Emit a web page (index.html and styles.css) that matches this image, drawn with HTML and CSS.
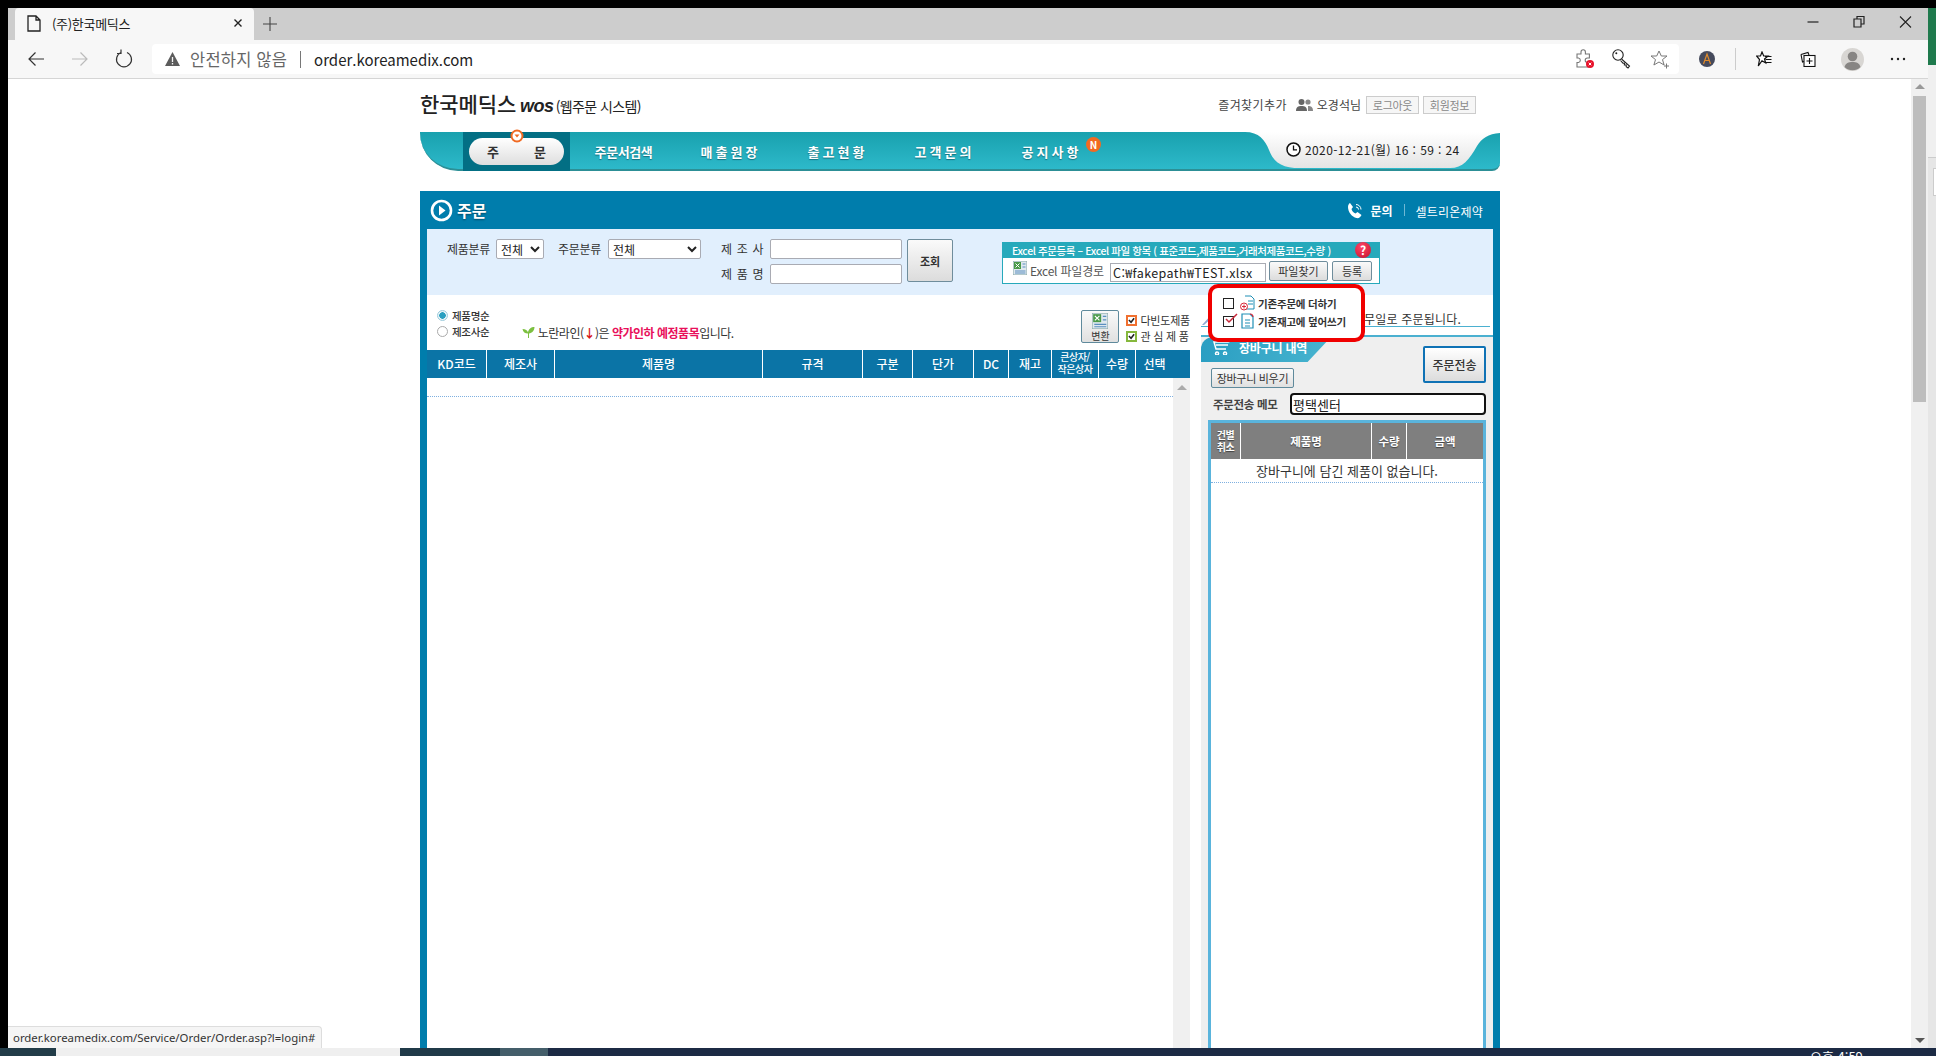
FILE: index.html
```html
<!DOCTYPE html>
<html lang="ko">
<head>
  <meta charset="UTF-8">
  <title>(주)한국메딕스</title>
  <link rel="stylesheet" href="styles.css">
</head>
<body>

<div class="screen">
  <div class="browser">

    <!-- 탭 -->
    <div class="tabstrip">
      <div class="tab">
        <svg class="tab-doc" width="14" height="17" viewBox="0 0 14 17"><path d="M1 1h8l4 4v11H1zM9 1v4h4" fill="none" stroke="#222" stroke-width="1.3"/></svg>
        <span class="tab-title">(주)한국메딕스</span>
        <svg class="tab-x" width="10" height="10" viewBox="0 0 10 10"><path d="M1.5 1.5l7 7M8.5 1.5l-7 7" stroke="#222" stroke-width="1.4"/></svg>
      </div>
      <svg class="tab-plus" width="16" height="16" viewBox="0 0 16 16"><path d="M8 1v14M1 8h14" stroke="#444" stroke-width="1.1"/></svg>
      <div class="winbtns">
        <svg width="46" height="14" viewBox="0 0 46 14"><path d="M17.500 7h11" stroke="#222" stroke-width="1.2"/></svg>
        <svg width="46" height="14" viewBox="0 0 46 14"><path d="M18 4h7v8h-7zM21 4V1.500h7v7.500h-3" fill="none" stroke="#222" stroke-width="1.2"/></svg>
        <svg width="46" height="14" viewBox="0 0 46 14"><path d="M18 1.500l11 11M29 1.500l-11 11" stroke="#222" stroke-width="1.1"/></svg>
      </div>
    </div>

    <div class="toolbar">
      <div class="tool"><svg width="18" height="16" viewBox="0 0 18 16"><path d="M17 8H2M8.500 1.500L2 8l6.500 6.500" fill="none" stroke="#333" stroke-width="1.2"/></svg></div>
      <div class="tool"><svg width="18" height="16" viewBox="0 0 18 16"><path d="M1 8h15M9.500 1.500L16 8l-6.500 6.500" fill="none" stroke="#bbb" stroke-width="1.2"/></svg></div>
      <div class="tool"><svg width="18" height="20" viewBox="0 0 18 20"><path d="M6 3.500a7.500 7.500 0 1 0 6 0M6 0.500v4h-4" fill="none" stroke="#333" stroke-width="1.2"/></svg></div>
      <div class="addr">
        <svg class="addr-warn" width="15" height="14" viewBox="0 0 15 14"><path d="M7.500 0L15 14H0z" fill="#5c5c5c"/><path d="M7.500 5v5M7.500 11v1.500" stroke="#f4f4f4" stroke-width="1.300"/></svg>
        <span class="addr-warn-text">안전하지 않음</span>
        <span class="addr-sep"></span>
        <span class="addr-url">order.koreamedix.com</span>
        <div class="addr-icons">
          <svg width="24" height="22" viewBox="0 0 24 22"><path d="M7 6h4V4a2.200 2.200 0 0 1 4.400 0v2h4v4h-2a2.200 2.200 0 0 0 0 4.400h1V19H7v-4.500h1.500a2.300 2.300 0 0 0 0-4.500H7z" fill="none" stroke="#777" stroke-width="1.100"/><circle cx="20" cy="16" r="4" fill="#e8132b"/><path d="M18.700 14.700l2.600 2.600M21.300 14.700l-2.600 2.600" stroke="#fff"/></svg>
          <svg width="24" height="22" viewBox="0 0 24 22"><circle cx="9" cy="7" r="5.200" fill="#fff" stroke="#222" stroke-width="1.100"/><circle cx="7.300" cy="5.300" r="1" fill="#222"/><path d="M12.500 11l8 7-1.500 2-1.800-1.200v-1.800h-1.800v-1.800l-1.400 0-2.500-2.700" fill="#fff" stroke="#222" stroke-width="1.100"/></svg>
          <svg width="24" height="22" viewBox="0 0 24 22"><path d="M11 3l2.300 5h5.700l-4.500 3.600 1.600 5.400L11 14l-5.100 3 1.600-5.400L3 8h5.700z" fill="none" stroke="#777" stroke-width="1"/><path d="M18.500 15.500v5M16 18h5" stroke="#777"/></svg>
        </div>
      </div>
      <div class="tool tool-first">
        <svg width="16" height="16" viewBox="0 0 16 16"><circle cx="8" cy="8" r="8" fill="#454a5c"/><path d="M4.500 13L8 3l3.500 10M6 9.500h4" fill="none" stroke="#e08a2a" stroke-width="1.200"/></svg>
      </div>
      <span class="tool-sep"></span>
      <div class="tool"><svg width="16" height="16" viewBox="0 0 16 16"><path d="M6 1l1.700 4h4.300l-3.500 3 1.200 4L6 9.700 2.300 15l1.200-6.500L0.500 5H4.500z" fill="#fff" stroke="#111" stroke-width="1.200"/><path d="M9 5.500h6.500M9.500 8.500h6M10 11.500h5.500" stroke="#111" stroke-width="1.200"/></svg></div>
      <div class="tool"><svg width="16" height="16" viewBox="0 0 16 16"><path d="M1 3.500l7-2 1 2.500M1 3.500l1.500 7.500 1.500-.5" fill="none" stroke="#111" stroke-width="1.100"/><rect x="4" y="4.500" width="11" height="11" fill="#fff" stroke="#111" stroke-width="1.100"/><path d="M9.500 7v6M6.500 10h6" stroke="#111" stroke-width="1.100"/></svg></div>
      <div class="tool"><svg width="23" height="23" viewBox="0 0 23 23"><circle cx="11.500" cy="11.500" r="11.500" fill="#d8d6d3"/><circle cx="11.500" cy="8.500" r="4.800" fill="#878583"/><path d="M3.500 19c1-4 4-5 8-5s7 1 8 5a11.500 11.500 0 0 1-16 0z" fill="#878583"/></svg></div>
      <div class="tool tool-dots"><svg width="16" height="4" viewBox="0 0 16 4"><circle cx="2" cy="2" r="1.200" fill="#222"/><circle cx="8" cy="2" r="1.200" fill="#222"/><circle cx="14" cy="2" r="1.200" fill="#222"/></svg></div>
    </div>

    <div class="viewport">
      <div class="page">
        <div class="sheet">

          <div class="topline">
            <div class="logo"><span class="logo-ko">한국메딕스</span> <span class="logo-wos">wos</span> <span class="logo-sub">(웹주문 시스템)</span></div>
            <div class="usermenu">
              <span class="user-fav">즐겨찾기추가</span>
              <svg class="user-ico" width="17" height="12" viewBox="0 0 17 12"><circle cx="5.500" cy="3" r="3" fill="#666"/><path d="M0 12c0-4 2-5 5.500-5s5.500 1 5.500 5z" fill="#666"/><circle cx="12" cy="3" r="2.600" fill="#888"/><path d="M12 12h5c0-4-2-5-5-5z" fill="#888"/></svg>
              <span class="user-name">오경석님</span>
              <span class="ubtn">로그아웃</span>
              <span class="ubtn">회원정보</span>
            </div>
          </div>

          <!-- 메뉴 -->
          <div class="nav">
            <div class="nav-on">
              <div class="nav-pill"><span>주</span><span>문</span></div>
              <svg class="nav-mark" width="14" height="14" viewBox="0 0 14 14"><circle cx="7" cy="7" r="5.500" fill="#fff" stroke="#f06a23" stroke-width="2"/><path d="M4.500 5.500h5L7 8.500z" fill="#f06a23"/></svg>
            </div>
            <div class="nav-item">주문서검색</div>
            <div class="nav-item nav-wide">매출원장</div>
            <div class="nav-item nav-wide">출고현황</div>
            <div class="nav-item nav-wide">고객문의</div>
            <div class="nav-item nav-wide">공지사항<span class="nav-new">N</span></div>
            <div class="nav-clock">
              <svg class="clock-bg" width="255" height="39" viewBox="0 0 255 39"><defs><linearGradient id="cg" x1="0" y1="0" x2="0" y2="1"><stop offset="0" stop-color="#fff"/><stop offset="1" stop-color="#e4e4e4"/></linearGradient></defs><path d="M0 0C14 0 20 8 24 18C29 31 38 36 55 36L205 36C218 36 224 28 232 14C237 6 243 2 255 1L255 0Z" fill="url(#cg)"/></svg>
              <svg class="clock-ico" width="15" height="15" viewBox="0 0 15 15"><circle cx="7.500" cy="7.500" r="6.500" fill="#fff" stroke="#111" stroke-width="1.500"/><path d="M7.500 3.500v4.300h3.500" fill="none" stroke="#111" stroke-width="1.300"/></svg>
              <span class="clock-text">2020-12-21(월) 16 : 59 : 24</span>
            </div>
          </div>

          <div class="panel">
            <div class="panel-head">
              <div class="panel-title">
                <svg width="23" height="23" viewBox="0 0 23 23"><circle cx="11.500" cy="11.500" r="9.500" fill="none" stroke="#fff" stroke-width="2.600"/><path d="M9 6.500l6.500 5-6.500 5z" fill="#fff"/></svg>
                <span>주문</span>
              </div>
              <div class="panel-links">
                <svg width="17" height="17" viewBox="0 0 17 17"><path d="M3 1l3 4-1.500 2c.5 2 2 3.500 4 4.500L10.500 10l4 3c-1 2.500-3 3.500-5 3C5 15 1 10 1 5c0-2 1-3.500 2-4z" fill="#fff"/><path d="M9 2.500a5 5 0 0 1 5 5M9 5a2.500 2.500 0 0 1 2.500 2.500" fill="none" stroke="#fff"/></svg>
                <span class="link-ask">문의</span>
                <span class="link-sep"></span>
                <span class="link-co">셀트리온제약</span>
              </div>
            </div>

            <!-- 검색 -->
            <div class="search">
              <label class="slabel">제품분류</label>
              <select class="sel sel-a"><option>전체</option></select>
              <label class="slabel slabel-b">주문분류</label>
              <select class="sel sel-b"><option>전체</option></select>
              <div class="sfields">
                <div class="sfield"><label class="slabel-wide">제 조 사</label><input class="sinput" type="text"></div>
                <div class="sfield"><label class="slabel-wide">제 품 명</label><input class="sinput" type="text"></div>
              </div>
              <button class="sbtn" type="button">조회</button>

              <div class="excel">
                <div class="excel-title">
                  <span>Excel 주문등록 – Excel 파일 항목 ( 표준코드,제품코드,거래처제품코드,수량 )</span>
                  <span class="excel-help">?</span>
                </div>
                <div class="excel-row">
                  <svg class="xls-ico" width="14" height="14" viewBox="0 0 14 14"><rect width="14" height="14" fill="#dfe8ee" stroke="#8aa"/><rect x="1" y="1" width="7" height="7" fill="#4a9a4a"/><path d="M2.500 2.500l4 4M6.500 2.500l-4 4" stroke="#fff"/><path d="M9.500 3h3M9.500 6h3M2 10h10.500M2 12h10.500" stroke="#5a8fc0"/></svg>
                  <span class="excel-label">Excel 파일경로</span>
                  <input class="excel-path" type="text" value="C:₩fakepath₩TEST.xlsx">
                  <button class="xbtn xbtn-find" type="button">파일찾기</button>
                  <button class="xbtn xbtn-reg" type="button">등록</button>
                </div>
              </div>
            </div>

            <div class="main">
              <div class="left">
                <div class="opts">
                  <div class="radios">
                    <div class="radio-line"><span class="radio radio-on"></span>제품명순</div>
                    <div class="radio-line"><span class="radio"></span>제조사순</div>
                  </div>
                  <div class="note">
                    <svg width="13" height="12" viewBox="0 0 13 12"><path d="M6 12V7.500C3 7.500 1 6 0.500 3 3.500 3 5.500 4.500 6 6.500 6.500 3 9 1 12.500 1 12.500 4.500 10 7 7 7.500V12z" fill="#7cc040"/></svg>
                    <span>노란라인(<span class="note-arrow">↓</span>)은 <b>약가인하 예정품목</b>입니다.</span>
                  </div>
                  <button class="convert" type="button">
                    <svg width="16" height="16" viewBox="0 0 14 14"><rect width="14" height="14" fill="#dfe8ee" stroke="#8aa"/><rect x="1" y="1" width="7" height="7" fill="#4a9a4a"/><path d="M2.500 2.500l4 4M6.500 2.500l-4 4" stroke="#fff"/><path d="M9.500 3h3M9.500 6h3M2 10h10.500M2 12h10.500" stroke="#5a8fc0"/></svg>
                    <span>변환</span>
                  </button>
                  <div class="checks">
                    <div class="check-line"><span class="check check-or"><svg width="8" height="7" viewBox="0 0 8 7"><path d="M1 3l2.500 2.500L7 1" fill="none" stroke="#222" stroke-width="1.800"/></svg></span>다빈도제품</div>
                    <div class="check-line"><span class="check check-gr"><svg width="8" height="7" viewBox="0 0 8 7"><path d="M1 3l2.500 2.500L7 1" fill="none" stroke="#222" stroke-width="1.800"/></svg></span>관 심 제 품</div>
                  </div>
                </div>

                <div class="thead">
                  <div>KD코드</div><div>제조사</div><div>제품명</div><div>규격</div><div>구분</div><div>단가</div><div>DC</div><div>재고</div><div class="th-small">큰상자/<br>작은상자</div><div>수량</div><div class="th-last">선택</div>
                </div>
                <div class="listwrap">
                  <div class="list"><div class="list-row"></div></div>
                  <div class="vbar"><span class="vbar-up"></span></div>
                </div>
              </div>

              <div class="right">
                <div class="notice">
                  <svg class="notice-ico" width="14" height="14" viewBox="0 0 14 14"><path d="M1 13L11 2l2 2L3 13z" fill="#8fa8d0"/></svg>
                  <span>무일로 주문됩니다.</span>
                </div>
                <div class="cart">
                  <div class="cart-top">
                    <div class="cart-left">
                      <div class="cart-tab">
                        <svg width="22" height="16" viewBox="0 0 22 16"><path d="M21 1l-5 2H2l2 7h10M4 6h12M5 13a1.500 1.500 0 1 0 .1 0M13 13a1.500 1.500 0 1 0 .1 0" fill="none" stroke="#fff" stroke-width="1.500"/></svg>
                        <span>장바구니 내역</span>
                      </div>
                      <button class="cart-empty" type="button">장바구니 비우기</button>
                    </div>
                    <button class="cart-send" type="button">주문전송</button>
                  </div>
                  <div class="memo">
                    <label>주문전송 메모</label>
                    <input class="memo-input" type="text" value="평택센터">
                  </div>
                  <div class="cart-box">
                    <div class="cart-head">
                      <div class="th-small">건별<br>취소</div><div>제품명</div><div>수량</div><div>금액</div>
                    </div>
                    <div class="cart-none">장바구니에 담긴 제품이 없습니다.</div>
                  </div>
                </div>
              </div>

              <!-- 엑셀 옵션 팝업 -->
              <div class="popup">
                <div class="popup-line">
                  <span class="pcheck"></span>
                  <svg width="15" height="16" viewBox="0 0 15 16"><path d="M5 1h6l3 3v10H4" fill="none" stroke="#1f8fb5"/><path d="M8 6h5M8 9h5" stroke="#1f8fb5"/><circle cx="4" cy="11.500" r="3.500" fill="#fff" stroke="#d8283a"/><path d="M2 11.500h4M4 9.500v4" stroke="#d8283a"/></svg>
                  <span>기존주문에 더하기</span>
                </div>
                <div class="popup-line">
                  <span class="pcheck"><svg class="pcheck-mark" width="14" height="12" viewBox="0 0 14 12"><path d="M2 6l3 3 8-8" fill="none" stroke="#c8283a" stroke-width="1.500"/></svg></span>
                  <svg width="15" height="16" viewBox="0 0 15 16"><path d="M2 1h8l3 3v11H2z" fill="none" stroke="#1f8fb5" stroke-width="1.200"/><path d="M10 1c2 0 3 1 3 3" fill="none" stroke="#d8283a" stroke-width="1.200"/><path d="M5 7h5M5 10h5M5 13h5" stroke="#1f8fb5"/></svg>
                  <span>기존재고에 덮어쓰기</span>
                </div>
              </div>
            </div>
          </div>
        </div>

        <div class="statusbar">order.koreamedix.com/Service/Order/Order.asp?l=login#</div>
      </div>

      <div class="pagebar">
        <span class="pagebar-up"></span>
        <span class="pagebar-thumb"></span>
        <span class="pagebar-down"></span>
      </div>
    </div>
  </div>

  <div class="behind">
    <div class="behind-green"></div>
    <div class="behind-mid"></div>
    <div class="behind-low"><span class="behind-box"></span></div>
  </div>
</div>

<div class="taskbar">
  <span class="task-a"></span>
  <span class="task-b"></span>
  <span class="task-c"></span>
  <span class="task-d"></span>
  <span class="task-time">오후 4:59</span>
</div>

</body>
</html>
```

FILE: styles.css
```css
* {
  box-sizing: border-box;
}
html, body {
  margin: 0;
  height: 1056px;
  overflow: hidden;
}
body {
  display: flex;
  flex-direction: column;
  background: #000;
  font-family: "Noto Sans CJK KR", "Noto Sans", sans-serif;
  font-size: 12px;
  color: #333;
}
button, input, select {
  font-family: inherit;
  margin: 0;
}

.screen {
  height: 1048px;
  padding: 8px 0 0 8px;
  display: flex;
}
.browser {
  width: 1920px;
  display: flex;
  flex-direction: column;
  background: #fff;
}

/* tab strip */
.tabstrip {
  height: 32px;
  background: #cdcdcd;
  display: flex;
  align-items: flex-end;
  padding-left: 7px;
}
.tab {
  width: 239px;
  height: 32px;
  background: #f7f7f7;
  border-radius: 4px 4px 0 0;
  display: flex;
  align-items: center;
  padding: 0 0 2px 12px;
}
.tab-title {
  margin-left: 11px;
  font-size: 13px;
  letter-spacing: -0.3px;
  color: #222;
  flex: 1;
}
.tab-x {
  margin-right: 11px;
}
.tab-plus {
  margin: 0 0 8px 8px;
}
.winbtns {
  margin-left: auto;
  height: 28px;
  align-self: flex-start;
  display: flex;
  align-items: center;
}

/* toolbar */
.toolbar {
  height: 39px;
  background: #f7f7f7;
  border-bottom: 1px solid #d5d5d5;
  display: flex;
  align-items: center;
  padding-left: 6px;
}
.tool {
  width: 44px;
  height: 30px;
  display: flex;
  align-items: center;
  justify-content: center;
  flex: none;
}
.tool-first {
  margin-left: 6px;
}
.tool-sep {
  width: 1px;
  height: 22px;
  background: #ccc;
  margin: 0 6px;
}
.tool-dots {
  margin-left: 2px;
}
.addr {
  width: 1527px;
  margin-left: 6px;
  height: 30px;
  background: #fff;
  border-radius: 4px;
  display: flex;
  align-items: center;
  padding-left: 13px;
}
.addr-warn-text {
  margin-left: 10px;
  font-size: 16.500px;
  letter-spacing: 0.2px;
  color: #666;
}
.addr-sep {
  width: 1px;
  height: 17px;
  background: #777;
  margin: 0 13px;
}
.addr-url {
  font-size: 15px;
  color: #222;
}
.addr-icons {
  margin-left: auto;
  display: flex;
  gap: 15px;
  padding-right: 7px;
  align-items: center;
}

/* page */
.viewport {
  flex: 1;
  min-height: 0;
  display: flex;
}
.page {
  width: 1903px;
  position: relative;
  overflow: hidden;
  padding-left: 412px;
}
.sheet {
  width: 1080px;
  height: 100%;
  display: flex;
  flex-direction: column;
}
.pagebar {
  width: 17px;
  background: #f0f0f0;
  display: flex;
  flex-direction: column;
  align-items: center;
  padding-top: 5px;
}
.pagebar-up {
  border: 5px solid transparent;
  border-top: 0;
  border-bottom: 5px solid #999;
}
.pagebar-thumb {
  width: 13px;
  height: 306px;
  margin-top: 7px;
  background: #bdbdbd;
}
.pagebar-down {
  margin-top: auto;
  margin-bottom: 5px;
  border: 5px solid transparent;
  border-bottom: 0;
  border-top: 5px solid #555;
}
.behind {
  width: 8px;
  display: flex;
  flex-direction: column;
  background: #f0f0f0;
}
.behind-green {
  height: 57px;
  background: #1f7a4d;
}
.behind-mid {
  height: 93px;
  border-bottom: 1px solid #ccc;
}
.behind-low {
  flex: 1;
  background: #e6e6e6;
  padding: 10px 0 0 5px;
}
.behind-box {
  display: block;
  height: 28px;
  background: #fff;
  border: 1px solid #ccc;
  border-right: 0;
}

/* top line */
.topline {
  height: 53px;
  flex: none;
  display: flex;
  justify-content: space-between;
  align-items: center;
  padding: 0 24px 2px 0;
}
.logo {
  display: flex;
  align-items: baseline;
  gap: 4px;
  color: #222;
  margin-top: -3px;
}
.logo-ko {
  font-size: 21px;
  font-weight: 500;
  letter-spacing: -0.1px;
}
.logo-wos {
  font-family: "Liberation Sans", sans-serif;
  font-size: 18px;
  font-weight: bold;
  font-style: italic;
  letter-spacing: -0.5px;
}
.logo-sub {
  font-size: 14px;
  letter-spacing: -0.6px;
  margin-left: -2px;
}
.usermenu {
  display: flex;
  align-items: center;
  font-size: 12px;
  color: #444;
}
.user-fav {
  letter-spacing: 0.4px;
}
.user-ico {
  margin: 0 4px 0 9px;
}
.ubtn {
  width: 53px;
  height: 18px;
  margin-left: 4px;
  border: 1px solid #ccc;
  background: #f6f6f6;
  color: #888;
  font-size: 11px;
  line-height: 16px;
  text-align: center;
  letter-spacing: -0.3px;
}
.user-name {
  margin-right: 1px;
}

/* nav */
.nav {
  height: 39px;
  flex: none;
  display: flex;
  background: linear-gradient(#19a1ae, #2db9ca);
  border-radius: 0 0 8px 38px;
  border-bottom: 2px solid #2c8f96;
  padding-left: 43px;
  position: relative;
  color: #fff;
}
.nav-on {
  width: 107px;
  margin-bottom: -2px;
  background: #036f84;
  padding: 6px;
  position: relative;
}
.nav-pill {
  height: 27px;
  border-radius: 14px;
  background: linear-gradient(#fff, #dedede);
  color: #333;
  font-size: 13px;
  font-weight: 700;
  display: flex;
  align-items: center;
  justify-content: space-between;
  padding: 0 18px;
}
.nav-mark {
  position: absolute;
  top: -3px;
  left: 47px;
}
.nav-item {
  width: 107px;
  font-size: 13px;
  font-weight: 700;
  line-height: 39px;
  text-align: center;
  letter-spacing: -0.4px;
  text-shadow: 0 1px 1px rgba(0, 50, 60, 0.5);
  position: relative;
}
.nav-wide {
  letter-spacing: 3px;
}
.nav-new {
  position: absolute;
  top: 5px;
  left: 88px;
  width: 15px;
  height: 15px;
  border-radius: 50%;
  background: #f26a21;
  font-size: 10px;
  line-height: 15px;
  letter-spacing: 0;
  text-shadow: none;
}
.nav-clock {
  position: absolute;
  right: 0;
  top: 0;
  width: 255px;
  height: 39px;
  display: flex;
  align-items: center;
  padding: 0 0 5px 41px;
  color: #222;
}
.clock-bg {
  position: absolute;
  top: 0;
  left: 0;
}
.clock-ico, .clock-text {
  position: relative;
}
.clock-text {
  margin-left: 4px;
  font-size: 12px;
  letter-spacing: 0.4px;
}

/* panel */
.panel {
  flex: 1;
  min-height: 0;
  margin-top: 20px;
  background: #007dac;
  padding: 0 7px;
  display: flex;
  flex-direction: column;
}
.panel-head {
  height: 38px;
  flex: none;
  display: flex;
  justify-content: space-between;
  align-items: center;
  color: #fff;
}
.panel-title {
  display: flex;
  align-items: center;
  gap: 4px;
  padding-left: 3px;
  font-size: 16px;
  font-weight: 700;
  text-shadow: 0 1px 2px rgba(0, 0, 0, 0.4);
}
.panel-links {
  display: flex;
  align-items: center;
  padding: 0 10px 0 0;
}
.link-ask {
  margin-left: 6px;
  font-weight: 700;
}
.link-sep {
  width: 1px;
  height: 12px;
  background: #6fb8d4;
  margin: 0 11px;
}
.link-co {
  margin-top: 3px;
  letter-spacing: 0.2px;
}

/* search */
.search {
  height: 66px;
  flex: none;
  background: #e1effd;
  display: flex;
  align-items: flex-start;
  padding: 10px 0 0 20px;
}
.slabel, .slabel-b {
  width: 43px;
  line-height: 20px;
  letter-spacing: -0.3px;
  white-space: nowrap;
  margin-right: 6px;
}
.slabel-b {
  margin-left: 14px;
  margin-right: 7px;
}
.sel {
  height: 20px;
  border: 1px solid #a9abb3;
  border-radius: 2px;
  background: #fff;
  font-size: 12px;
  color: #222;
  padding: 0;
}
.sel-a {
  width: 48px;
}
.sel-b {
  width: 93px;
}
.sfields {
  margin-left: 20px;
  display: flex;
  flex-direction: column;
  gap: 5px;
}
.sfield {
  display: flex;
  align-items: center;
  gap: 6px;
}
.slabel-wide {
  width: 43px;
  white-space: nowrap;
  letter-spacing: 0.7px;
  line-height: 18px;
}
.sinput {
  width: 132px;
  height: 20px;
  border: 1px solid #a9abb3;
  border-radius: 2px;
  background: #fff;
}
.sbtn {
  width: 46px;
  height: 43px;
  margin-left: 5px;
  padding: 0;
  border: 1px solid #6f8d9c;
  border-radius: 2px;
  background: linear-gradient(#fafafa, #dcdcdc);
  font-size: 11px;
  font-weight: 700;
  color: #333;
}
.excel {
  width: 378px;
  margin: 3px 0 0 49px;
  height: 42px;
  background: #fff;
  border: 1px solid #26a9bb;
}
.excel-title {
  height: 15px;
  background: #26a9bb;
  color: #fff;
  font-size: 10.500px;
  font-weight: 500;
  line-height: 15px;
  padding-left: 9px;
  letter-spacing: -0.4px;
  white-space: nowrap;
  position: relative;
}
.excel-help {
  position: absolute;
  top: -1px;
  left: 352px;
  width: 16px;
  height: 16px;
  border-radius: 50%;
  background: radial-gradient(circle at 40% 30%, #f46, #c4122c);
  font-weight: 700;
  font-size: 12px;
  line-height: 16px;
  text-align: center;
  letter-spacing: 0;
}
.excel-row {
  height: 25px;
  display: flex;
  align-items: center;
  padding-left: 10px;
}
.xls-ico {
  margin-top: -6px;
}
.excel-label {
  margin-left: 3px;
  width: 80px;
  color: #555;
  font-size: 12px;
  letter-spacing: -0.2px;
  white-space: nowrap;
}
.excel-path {
  width: 156px;
  height: 19px;
  margin-top: 3px;
  border: 1px solid #a9abb3;
  font-size: 12.500px;
  padding: 0 2px;
  color: #222;
  letter-spacing: 0.4px;
}
.xbtn {
  height: 20px;
  padding: 0;
  border: 1px solid #6f8d9c;
  border-radius: 2px;
  background: linear-gradient(#fafafa, #dcdcdc);
  font-size: 11px;
  color: #333;
}
.xbtn-find {
  width: 59px;
  margin-left: 3px;
}
.xbtn-reg {
  width: 40px;
  margin-left: 4px;
}

/* main */
.main {
  flex: 1;
  min-height: 0;
  background: #fff;
  display: flex;
  gap: 11px;
  position: relative;
}
.left {
  width: 763px;
  display: flex;
  flex-direction: column;
}
.opts {
  height: 55px;
  flex: none;
  display: flex;
  padding-left: 10px;
}
.radios {
  width: 85px;
  padding-top: 12px;
}
.radio-line {
  height: 16px;
  display: flex;
  align-items: center;
  gap: 4px;
  font-size: 10.500px;
  font-weight: 500;
  letter-spacing: -0.3px;
  white-space: nowrap;
}
.radio {
  width: 11px;
  height: 11px;
  border: 1px solid #aaa;
  border-radius: 50%;
  background: #fff;
}
.radio-on {
  border-color: #9ccbdc;
  background: radial-gradient(circle, #2a9fc0 0 3px, #e8f4f8 3.500px);
}
.note {
  margin-top: 29px;
  height: 16px;
  display: flex;
  align-items: center;
  gap: 3px;
  font-size: 12px;
  letter-spacing: -0.5px;
  white-space: nowrap;
  width: 561px;
}
.note b {
  color: #e8105a;
  font-weight: 700;
}
.note-arrow {
  color: #d81818;
  font-weight: 700;
}
.convert {
  width: 38px;
  height: 33px;
  margin-top: 15px;
  padding: 2px 0 0;
  border: 1px solid #5f8a9c;
  border-radius: 2px;
  background: linear-gradient(#fafafa, #e0e0e0);
  font-size: 10px;
  color: #333;
  display: flex;
  flex-direction: column;
  align-items: center;
  line-height: 13px;
  flex: none;
}
.checks {
  padding: 17px 0 0 7px;
}
.check-line {
  height: 16px;
  display: flex;
  align-items: center;
  gap: 3px;
  font-size: 11px;
  white-space: nowrap;
  letter-spacing: -0.2px;
}
.check {
  width: 11px;
  height: 11px;
  background: #fff;
  border: 2px solid #f07030;
  display: flex;
  align-items: center;
  justify-content: center;
}
.check-gr {
  border-color: #86b83c;
}
.thead {
  height: 28px;
  flex: none;
  background: #0b74a6;
  display: grid;
  grid-template-columns: 60px 68px 208px 100px 50px 61px 35px 43px 47px 37px 54px;
  color: #fff;
  font-size: 12px;
  font-weight: 500;
}
.thead > div {
  display: flex;
  align-items: center;
  justify-content: center;
  text-align: center;
  border-right: 1px solid #fff;
  padding-bottom: 2px;
}
.thead > .th-last {
  border-right: 0;
  padding-right: 17px;
}
.th-small {
  font-size: 10px;
  line-height: 12px;
  letter-spacing: -0.5px;
}
.listwrap {
  flex: 1;
  min-height: 0;
  display: flex;
}
.list {
  flex: 1;
}
.list-row {
  height: 19px;
  border-bottom: 1px dotted #7fb0e0;
}
.vbar {
  width: 17px;
  background: #f0f0f0;
  display: flex;
  justify-content: center;
  padding-top: 7px;
}
.vbar-up {
  height: 0;
  border: 5px solid transparent;
  border-top: 0;
  border-bottom: 5px solid #aaa;
}

/* cart */
.right {
  width: 292px;
  display: flex;
  flex-direction: column;
}
.notice {
  height: 32px;
  flex: none;
  display: flex;
  align-items: flex-end;
  border-bottom: 1px solid #4bb0d0;
  font-size: 12px;
  letter-spacing: 0.2px;
  color: #333;
  width: 289px;
}
.notice span {
  margin-left: 149px;
  line-height: 14px;
}
.cart {
  flex: 1;
  min-height: 0;
  margin-top: 8px;
  background: #efefef;
  border-top: 2px solid #4bb0d0;
  padding: 0 7px;
  display: flex;
  flex-direction: column;
}
.cart-top {
  display: flex;
  justify-content: space-between;
  align-items: flex-start;
  height: 56px;
  flex: none;
}
.cart-left {
  display: flex;
  flex-direction: column;
  align-items: flex-start;
}
.cart-tab {
  width: 130px;
  height: 25px;
  margin-left: -7px;
  border-radius: 12px 0 0 0;
  background: linear-gradient(100deg, #2a9ec2, #48b4cf);
  clip-path: polygon(0 0, 100% 0, 82% 100%, 0 100%);
  color: #fff;
  display: flex;
  align-items: center;
  gap: 5px;
  padding: 0 0 5px 11px;
  font-size: 12px;
  font-weight: 700;
  letter-spacing: -0.2px;
}
.cart-empty {
  width: 83px;
  height: 20px;
  margin: 6px 0 0 3px;
  padding: 0;
  border: 1px solid #5f8a9c;
  border-radius: 2px;
  background: linear-gradient(#fafafa, #e0e0e0);
  font-size: 11px;
  color: #333;
  letter-spacing: -0.3px;
}
.cart-send {
  width: 63px;
  height: 37px;
  margin-top: 9px;
  padding: 0;
  border: 2px solid #0f72b5;
  border-radius: 2px;
  background: linear-gradient(#fff, #dcdcdc);
  font-size: 12px;
  font-weight: 500;
  color: #333;
}
.memo {
  height: 22px;
  flex: none;
  display: flex;
  align-items: center;
}
.memo label {
  width: 82px;
  padding-left: 5px;
  font-size: 11.500px;
  font-weight: 700;
  color: #444;
  letter-spacing: -0.3px;
  white-space: nowrap;
}
.memo-input {
  width: 196px;
  height: 22px;
  border: 2px solid #111;
  border-radius: 4px;
  background: #fff;
  font-size: 13px;
  padding: 0 0 0 1px;
  color: #222;
}
.cart-box {
  flex: 1;
  margin-top: 5px;
  background: #fff;
  border: 3px solid #5ab4dc;
  border-bottom: 0;
}
.cart-head {
  height: 36px;
  background: #7f7f7f;
  display: grid;
  grid-template-columns: 30px 131px 35px 76px;
  color: #fff;
  font-size: 11.500px;
  font-weight: 700;
  text-shadow: 0 1px 1px rgba(0, 0, 0, 0.5);
}
.cart-head > div {
  display: flex;
  align-items: center;
  justify-content: center;
  text-align: center;
  border-right: 1px solid #fff;
}
.cart-head > div:last-child {
  border-right: 0;
}
.cart-none {
  height: 24px;
  line-height: 23px;
  text-align: center;
  border-bottom: 1px dotted #7fb0e0;
  font-size: 13px;
  color: #333;
}

/* popup over the list */
.popup {
  position: absolute;
  left: 781px;
  top: -11px;
  width: 157px;
  height: 58px;
  background: #fff;
  border: 4px solid #f00000;
  border-radius: 10px;
  padding: 7px 0 0 11px;
  display: flex;
  flex-direction: column;
  gap: 2px;
}
.popup-line {
  height: 16px;
  display: flex;
  align-items: center;
  gap: 3px;
  font-size: 10.500px;
  font-weight: 700;
  color: #333;
  letter-spacing: -0.2px;
  white-space: nowrap;
}
.pcheck {
  width: 11px;
  height: 11px;
  border: 1px solid #222;
  background: #fff;
  margin-right: 3px;
  position: relative;
  flex: none;
}
.pcheck-mark {
  position: absolute;
  left: 0;
  top: -4px;
}

.statusbar {
  position: absolute;
  left: 0;
  bottom: 0;
  height: 22px;
  width: 314px;
  background: #f5f5f5;
  border: 1px solid #ddd;
  border-bottom: 0;
  border-left: 0;
  border-radius: 0 4px 0 0;
  padding-left: 5px;
  font-size: 11.400px;
  line-height: 21px;
  color: #333;
  white-space: nowrap;
  font-family: "Noto Sans", sans-serif;
}

/* taskbar */
.taskbar {
  height: 8px;
  flex: none;
  display: flex;
  overflow: hidden;
  background: #1c2a44;
  position: relative;
}
.task-a {
  width: 56px;
  background: #223c48;
}
.task-b {
  width: 344px;
  background: #efefef;
}
.task-c {
  width: 100px;
  background: #203a48;
}
.task-d {
  width: 48px;
  background: #445e6a;
}
.task-time {
  position: absolute;
  left: 1810px;
  top: 1px;
  color: #fff;
  font-size: 13px;
  line-height: 16px;
}
```
